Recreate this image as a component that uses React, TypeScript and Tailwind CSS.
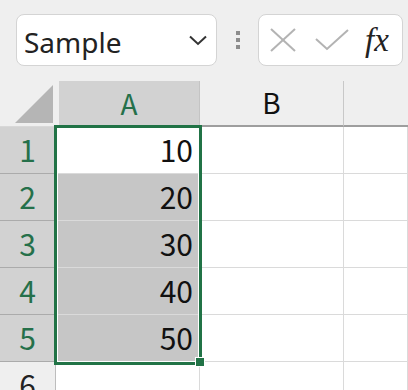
import React from "react";

const GREEN = "#217346";
const CJK = '"Noto Sans CJK JP", "Noto Sans", sans-serif';

function RowHeader({ n, selected }: { n: number; selected: boolean }) {
  return (
    <div
      className={`h-[47px] flex items-center justify-center pb-[3px] border-b border-r ${
        selected ? "bg-[#d2d2d2] border-b-[#ababab] border-r-[#ababab] text-[#25704a]" : "bg-[#efefef] border-b-[#d0d0d0] border-r-[#bdbdbd] text-[#222]"
      }`}
    >
      <span className="text-[30px] leading-none" style={{ fontFamily: CJK }}>{n}</span>
    </div>
  );
}

function DataCell({ value, grey }: { value?: string; grey?: boolean }) {
  return (
    <div
      className={`h-[47px] flex items-center justify-end pr-[6px] pb-[3px] border-b border-r border-[#dadada] ${
        grey ? "bg-[#c6c6c6]" : "bg-white"
      }`}
    >
      {value && (
        <span className="text-[30px] leading-none text-[#111]" style={{ fontFamily: CJK }}>
          {value}
        </span>
      )}
    </div>
  );
}

export default function App() {
  const rows = [1, 2, 3, 4, 5];
  return (
    <div
      className="w-[408px] h-[390px] bg-[#efefef] overflow-hidden relative"
      style={{ fontFamily: '"Noto Sans", "Noto Sans CJK JP", sans-serif' }}
    >
      {/* Toolbar */}
      <div className="flex items-center pt-[14px] h-[66px]">
        <div className="ml-[16px] w-[201px] h-[52px] bg-white border border-[#d4d4d4] rounded-[8px] flex items-center justify-between pl-[7px] pr-[9px]">
          <span className="text-[28px] text-[#222] leading-none pt-[3px]">Sample</span>
          <svg width="18" height="11" viewBox="0 0 18 11">
            <polyline points="1,1.5 9,9 17,1.5" fill="none" stroke="#333" strokeWidth="2" />
          </svg>
        </div>
        <div className="w-[41px] flex flex-col items-center gap-[3px]">
          <div className="w-[4px] h-[4px] bg-[#8c8c8c]" />
          <div className="w-[4px] h-[4px] bg-[#8c8c8c]" />
          <div className="w-[4px] h-[4px] bg-[#8c8c8c]" />
        </div>
        <div className="w-[145px] h-[52px] bg-white border border-[#d4d4d4] rounded-[8px] flex items-center pl-[11px]">
          <svg width="26" height="24" viewBox="0 0 26 24">
            <line x1="1" y1="1" x2="25" y2="23" stroke="#b3b3b3" strokeWidth="2" />
            <line x1="25" y1="1" x2="1" y2="23" stroke="#b3b3b3" strokeWidth="2" />
          </svg>
          <svg width="34" height="24" viewBox="0 0 34 24" className="ml-[19px]">
            <polyline points="1,11 12,21 33,2" fill="none" stroke="#b3b3b3" strokeWidth="2" />
          </svg>
          <span
            className="ml-[16px] text-[33px] italic font-normal text-[#222] leading-none"
            style={{ fontFamily: '"Liberation Serif", "DejaVu Serif", serif' }}
          >
            fx
          </span>
        </div>
      </div>

      {/* Grid */}
      <div className="relative mt-[15px]">
        <div className="grid grid-cols-[56px_144px_144px_64px]">
          {/* header row */}
          <div className="h-[46px] bg-[#efefef] relative border-b border-[#d8d8d8]">
            <svg width="56" height="46" viewBox="0 0 56 46" className="absolute left-0 top-0">
              <polygon points="53,4 53,42 15,42" fill="#b5b5b5" />
            </svg>
          </div>
          <div className="h-[46px] bg-[#d2d2d2] border-l-[3px] border-l-[#efefef] border-r border-r-[#c4c4c4] flex items-center justify-center pb-[2px] text-[#25704a]">
            <span className="text-[28px] leading-none" style={{ fontFamily: CJK }}>A</span>
          </div>
          <div className="h-[46px] bg-[#efefef] border-b-2 border-b-[#9e9e9e] border-r border-r-[#c8c8c8] flex items-center justify-center pb-[2px] text-[#111]">
            <span className="text-[28px] leading-none" style={{ fontFamily: CJK }}>B</span>
          </div>
          <div className="h-[46px] bg-[#efefef] border-b-2 border-b-[#9e9e9e]" />

          {rows.map((n) => (
            <React.Fragment key={n}>
              <RowHeader n={n} selected />
              <DataCell value={String(n * 10)} grey={n !== 1} />
              <DataCell />
              <DataCell />
            </React.Fragment>
          ))}
          <RowHeader n={6} selected={false} />
          <DataCell />
          <DataCell />
          <DataCell />
        </div>

        {/* selection overlay */}
        <div className="absolute left-[54px] top-[44px] w-[148px] h-[240px] border-[3px] border-[#217346] pointer-events-none">
          <div className="w-full h-full border border-white" />
        </div>
        <div
          className="absolute left-[195px] top-[276px] w-[10px] h-[10px] border border-white"
          style={{ backgroundColor: GREEN }}
        />
      </div>
    </div>
  );
}
